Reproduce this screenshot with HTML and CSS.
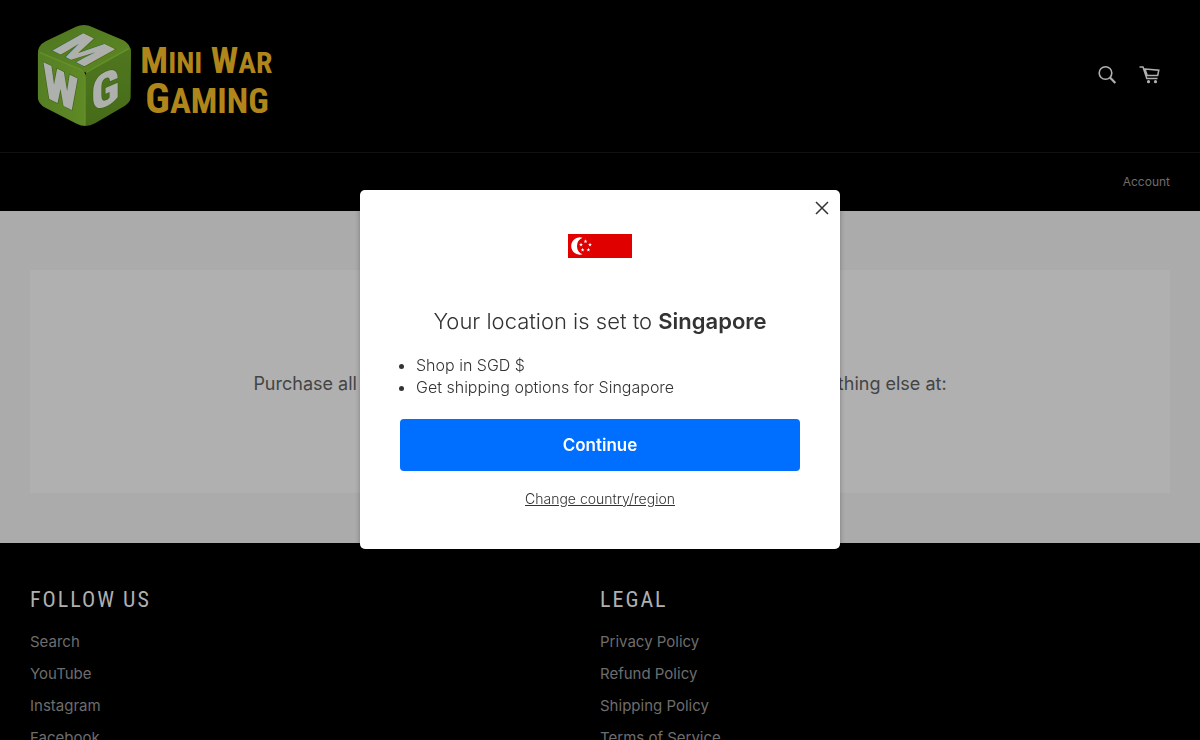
FILE: index.html
```html
<!DOCTYPE html>
<html lang="en">
<head>
<meta charset="utf-8">
<meta name="viewport" content="width=device-width, initial-scale=1">
<title>Mini War Gaming</title>
<link rel="stylesheet" href="styles.css">
</head>
<body>
<header class="header">
  <div class="header-main">
    <a class="logo" href="#" aria-label="Mini War Gaming">
      <svg viewBox="0 0 780 390" aria-hidden="true">
        <defs>
          <linearGradient id="top" x1="0" y1="0" x2="1" y2="1"><stop offset="0" stop-color="#4d7420"/><stop offset="1" stop-color="#5f8a24"/></linearGradient>
          <linearGradient id="left" x1="0" y1="0" x2="1" y2="0"><stop offset="0" stop-color="#557d24"/><stop offset="1" stop-color="#5f8a24"/></linearGradient>
          <linearGradient id="right" x1="0" y1="0" x2="0" y2="1"><stop offset="0" stop-color="#50771f"/><stop offset="1" stop-color="#456b18"/></linearGradient>
          <clipPath id="cube"><path d="M168 50Q193 39 218 52L310 91Q332 102 333 128L332 262Q331 277 315 287L225 340Q197 355 170 341L76 293Q53 281 53 257V133Q53 106 77 94Z"/></clipPath>
        </defs>
        <g clip-path="url(#cube)">
          <path fill="url(#top)" d="M40 30H350V115L195 187L40 122Z"/>
          <path fill="url(#left)" d="M40 118L180 176Q195 184 195 202V360H40Z"/>
          <path fill="url(#right)" d="M195 360V202Q196 184 213 176L350 106V360Z"/>
          <path d="M60 128L180 178Q195 186 195 200V345M197 188L326 116" fill="none" stroke="#65902a" stroke-width="4"/>
        </g>
        <g class="cube-letter">
          <text transform="matrix(1 .5 -.9 .5 91 118)">M</text>
          <text transform="matrix(1 .48 0 1 68 258)">W</text>
          <text transform="matrix(1 -.45 0 1 214 308)">G</text>
        </g>
        <text class="logo-text" x="361" y="190" font-size="110">M<tspan font-size="89">INI</tspan> W<tspan font-size="89">AR</tspan></text>
        <text class="logo-text" x="376" y="308" font-size="126">G<tspan font-size="105">AMING</tspan></text>
      </svg>
    </a>
    <div class="header-tools">
      <button class="icon-button" type="button" aria-label="Search">
        <svg width="20" height="20" viewBox="0 0 20 20" fill="none" stroke="currentColor"><circle cx="8.500" cy="8" r="6.300" stroke-width="1.6"/><path d="M13 12.500L18.300 18" stroke-width="2.2"/></svg>
      </button>
      <a class="icon-button" href="#" aria-label="Cart">
        <svg width="22" height="20" viewBox="0 0 22 20" fill="none" stroke="currentColor" stroke-width="1.5"><path d="M.5 2H4L7.800 13.500H18.500M6 4L19.800 5.200L18.700 10.500H8.200Z"/><g fill="currentColor" stroke="none"><circle cx="9.500" cy="16.700" r="1.600"/><circle cx="16.500" cy="16.700" r="1.600"/></g></svg>
      </a>
    </div>
  </div>
  <nav class="nav"><a href="#">Account</a></nav>
</header>
<main class="main">
  <section class="notice"><p>Purchase all of your miniatures, gaming supplies, scenery, and everything else at:</p></section>
</main>
<footer class="footer">
  <section>
    <h2>Follow Us</h2>
    <ul>
      <li><a href="#">Search</a></li>
      <li><a href="#">YouTube</a></li>
      <li><a href="#">Instagram</a></li>
      <li><a href="#">Facebook</a></li>
    </ul>
  </section>
  <section>
    <h2>Legal</h2>
    <ul>
      <li><a href="#">Privacy Policy</a></li>
      <li><a href="#">Refund Policy</a></li>
      <li><a href="#">Shipping Policy</a></li>
      <li><a href="#">Terms of Service</a></li>
    </ul>
  </section>
</footer>
<div class="overlay">
  <div class="modal" role="dialog" aria-modal="true" aria-labelledby="modal-title">
    <button class="close" type="button" aria-label="Close">
      <svg width="14" height="14" viewBox="0 0 14 14" fill="none" stroke="currentColor" stroke-width="1.5"><path d="M1 1L13 13M13 1L1 13"/></svg>
    </button>
    <svg class="flag" width="64" height="24" viewBox="0 0 64 24" role="img" aria-label="Singapore">
      <defs><path id="star" d="M0-2L.5-.6H1.900L.8.300L1.200 1.700L0 .9L-1.200 1.700L-.8.300L-1.900-.6H-.5Z"/></defs>
      <path fill="#e00000" d="M0 0H64V24H0Z"/>
      <path fill="#fff" d="M14.500 3.700A8.700 8.700 0 1 0 14.500 20.300A9 9 0 0 1 14.500 3.700Z"/>
      <g fill="#fff"><use href="#star" x="17.500" y="7.300"/><use href="#star" x="13" y="10.700"/><use href="#star" x="22" y="10.700"/><use href="#star" x="14.600" y="15.800"/><use href="#star" x="20.400" y="15.800"/></g>
    </svg>
    <h1 id="modal-title">Your location is set to <strong>Singapore</strong></h1>
    <ul class="benefits">
      <li>Shop in SGD $</li>
      <li>Get shipping options for Singapore</li>
    </ul>
    <button class="continue" type="button">Continue</button>
    <a class="change" href="#">Change country/region</a>
  </div>
</div>
</body>
</html>
```
FILE: styles.css
```css
* { box-sizing: border-box; }

body {
  margin: 0;
  background: #000;
  color: #444;
  font-family: Inter, "Liberation Sans", sans-serif;
  font-size: 15px;
}

a { color: inherit; text-decoration: none; }
button { padding: 0; border: 0; background: none; color: inherit; font-family: inherit; cursor: pointer; }
h1, h2, p, ul { margin: 0; }
svg { display: block; }

.header { background: #000; }
.header-main {
  display: flex;
  align-items: center;
  justify-content: space-between;
  padding: 10px 39px 12px 20px;
  border-bottom: 1px solid #111;
}
.logo svg { width: 260px; height: 130px; overflow: visible; }
.logo-text { fill: #b0851a; font-family: "Roboto Condensed", Roboto, sans-serif; font-weight: 700; }
.cube-letter {
  fill: #adb0ad;
  stroke: #41651c;
  stroke-width: 4px;
  paint-order: stroke;
  font-family: "Roboto Condensed", Roboto, sans-serif;
  font-size: 144px;
  font-weight: 900;
}
.header-tools { display: flex; gap: 22px; color: #b0b0b0; }
.nav {
  display: flex;
  justify-content: flex-end;
  padding: 19px 30px;
  color: #6d6d6d;
  font-size: 12px;
  line-height: 20px;
}

.main { padding: 59px 30px 50px; background: #ababab; }
.notice {
  padding: 102px 40px 97px;
  background: #b0b0b0;
  text-align: center;
  font-size: 18px;
  line-height: 24px;
}

.footer {
  display: grid;
  grid-template-columns: 1fr 1fr;
  padding: 40px 30px;
  color: #6d6d6d;
}
.footer h2 {
  margin-bottom: 10px;
  color: #b0b0b0;
  font-family: "Roboto Condensed", Roboto, sans-serif;
  font-size: 22px;
  font-weight: 400;
  line-height: 33px;
  letter-spacing: 2px;
  text-transform: uppercase;
}
.footer ul { padding: 0; list-style: none; }
.footer li { line-height: 32px; }

.overlay {
  position: fixed;
  inset: 0;
  display: flex;
  align-items: center;
  justify-content: center;
  padding-bottom: 1px;
}
.modal {
  position: relative;
  display: flex;
  flex-direction: column;
  align-items: center;
  width: 480px;
  max-width: 100%;
  padding: 44px 40px 40px;
  border-radius: 5px;
  background: #fff;
  color: #333;
  box-shadow: 0 1px 5px rgba(0, 0, 0, 0.3);
}
.close { position: absolute; top: 11px; right: 11px; }
.modal h1 { margin: 47px 0 17px; font-size: 22px; font-weight: 300; line-height: 32px; }
.modal strong { font-weight: 600; }
.benefits { align-self: stretch; padding-left: 16px; font-size: 16px; font-weight: 300; line-height: 22px; }
.continue {
  align-self: stretch;
  margin: 21px 0 18px;
  border-radius: 4px;
  background: #006fff;
  color: #fff;
  font-size: 17px;
  font-weight: 600;
  line-height: 52px;
}
.change { font-size: 14px; font-weight: 300; line-height: 20px; text-decoration: underline; }
```
